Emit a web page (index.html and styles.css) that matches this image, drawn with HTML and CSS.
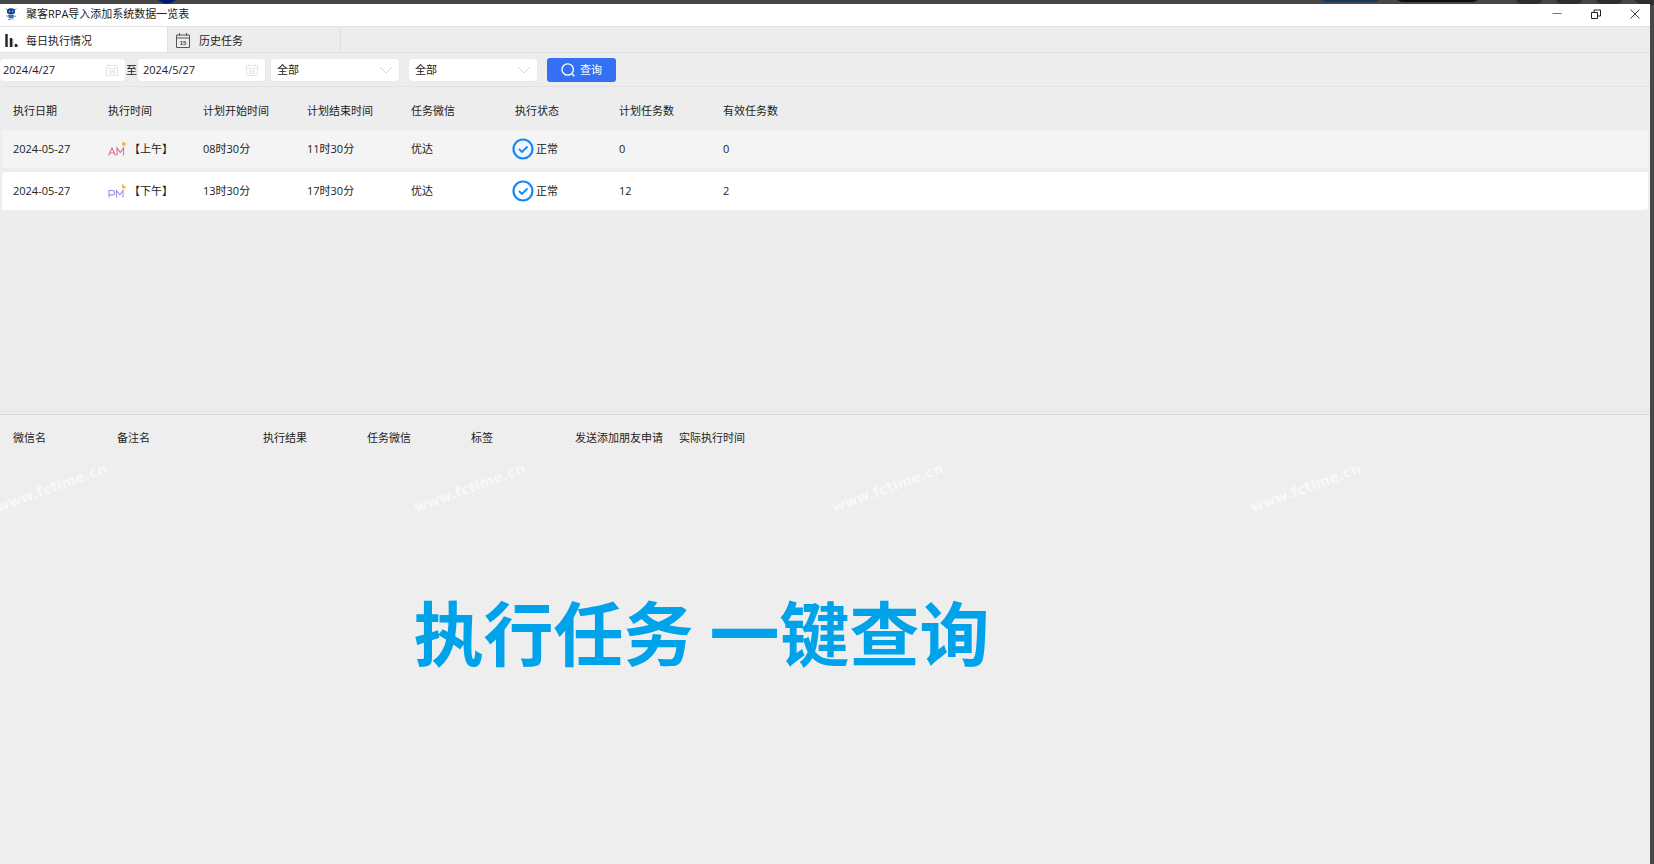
FILE: index.html
```html
<!DOCTYPE html>
<html lang="zh-CN">
<head>
<meta charset="utf-8">
<title>聚客RPA导入添加系统数据一览表</title>
<link rel="stylesheet" href="styles.css">
</head>
<body>
<svg class="desktop-strip" aria-hidden="true" height="6">
  <path d="M158 0h18l-6 3.500h-6z" fill="#001a70"/>
  <path d="M1321 0h58q-3 2-7 2h-44q-4 0-7-2z" fill="#10375c"/>
  <path d="M1397 0h81q-3 2-7 2h-67q-4 0-7-2z" fill="#0c0c0c"/>
  <g fill="#2d2d2d"><ellipse cx="1529" cy="0" rx="13" ry="5"/><ellipse cx="1569" cy="0" rx="13" ry="5"/><ellipse cx="1609" cy="0" rx="13" ry="5"/><ellipse cx="1648" cy="0" rx="13" ry="5"/></g>
</svg>
<div class="window">
  <header class="titlebar">
    <svg class="logo" viewBox="0 0 12 14" aria-hidden="true">
      <path d="M2 2.500Q6 0 10 2.500V6Q6 8.500 2 6z" fill="#123a8c"/>
      <path d="M.5 1.500l2 1.500M11.500 1.500l-2 1.500" stroke="#6da7dd" stroke-width="1"/>
      <circle cx="4.500" cy="4.300" r=".9" fill="#6fd0ff"/><circle cx="7.600" cy="4.300" r=".9" fill="#6fd0ff"/>
      <path d="M3.500 8h5l-.5 3h-4zM1 8.500l2 1M11 9l-2 .5" fill="#3b6fb5" stroke="#3b6fb5" stroke-width=".8"/>
      <path d="M3 12.700h3M7 12h2" stroke="#8da2bd" stroke-width="1.200"/>
    </svg>
    <h1 class="title">聚客RPA导入添加系统数据一览表</h1>
    <div class="window-buttons">
      <button aria-label="最小化"><svg viewBox="0 0 10 10"><path d="M.5 4.500h9" stroke="#777" stroke-width="1"/></svg></button>
      <button aria-label="还原"><svg viewBox="0 0 10 10"><path d="M.5 3.500h6v6h-6zM3 3.500V1h6.500v6H7" stroke="#222" fill="none"/></svg></button>
      <button aria-label="关闭"><svg viewBox="0 0 10 10"><path d="M.5.500l9 9M9.500.500l-9 9" stroke="#444"/></svg></button>
    </div>
  </header>
  <nav class="tabs">
    <button class="tab active">
      <svg class="tab-icon" viewBox="0 0 16 16" aria-hidden="true"><path d="M2.500 1v13M7 5v9M12 11v3" stroke="#222" stroke-width="2.400"/><path d="M8.700 6v8M13.700 12v2" stroke="#888" stroke-width="1"/></svg>
      每日执行情况
    </button>
    <button class="tab">
      <svg class="tab-icon" viewBox="0 0 16 16" aria-hidden="true"><path d="M1.500 2h13v12.500h-13zM1.500 5h13M4.500 0v3M11.500 0v3" stroke="#555" fill="none"/><text class="cal-num" x="8" y="12" fill="#444">15</text></svg>
      历史任务
    </button>
  </nav>
  <form class="filters" onsubmit="return false">
    <label class="field date">
      <input type="text" value="2024/4/27" aria-label="开始日期">
      <svg viewBox="0 0 14 14" aria-hidden="true"><path d="M1.500 2.500h11v10h-11zM1.500 5.500h11M4 1v2.500M10 1v2.500" stroke="#e6e6e6" fill="none"/><text class="cal-num" x="7" y="11" fill="#dcdcdc">15</text></svg>
    </label>
    <span class="to">至</span>
    <label class="field date">
      <input type="text" value="2024/5/27" aria-label="结束日期">
      <svg viewBox="0 0 14 14" aria-hidden="true"><path d="M1.500 2.500h11v10h-11zM1.500 5.500h11M4 1v2.500M10 1v2.500" stroke="#e6e6e6" fill="none"/><text class="cal-num" x="7" y="11" fill="#dcdcdc">15</text></svg>
    </label>
    <label class="field choice first">
      <select aria-label="任务微信"><option>全部</option></select>
      <svg viewBox="0 0 14 14" aria-hidden="true"><path d="M1 4l6 6 6-6" stroke="#d8d8d8" fill="none"/></svg>
    </label>
    <label class="field choice">
      <select aria-label="执行状态"><option>全部</option></select>
      <svg viewBox="0 0 14 14" aria-hidden="true"><path d="M1 4l6 6 6-6" stroke="#d8d8d8" fill="none"/></svg>
    </label>
    <button class="query"><svg viewBox="0 0 14 14" aria-hidden="true"><circle cx="6.700" cy="6.500" r="5.700" stroke="#fff" stroke-width="1.300" fill="none"/><path d="M11.300 11l2 2.300" stroke="#fff" stroke-width="1.500"/></svg>查询</button>
  </form>
  <section class="pane plans">
    <table class="grid">
      <colgroup><col class="c-short"><col class="c-short"><col class="c-std"><col class="c-std"><col class="c-std"><col class="c-std"><col class="c-std"><col></colgroup>
      <thead><tr><th>执行日期</th><th>执行时间</th><th>计划开始时间</th><th>计划结束时间</th><th>任务微信</th><th>执行状态</th><th>计划任务数</th><th>有效任务数</th></tr></thead>
      <tbody>
        <tr class="alt"><td>2024-05-27</td>
          <td><span class="half"><svg viewBox="0 0 18 14" aria-hidden="true"><path d="M.5 13.500L4 6 7.500 13.500M2 11h4M9 13.500V6l3.300 4.500L15.500 6v7.500" stroke="#e0708a" stroke-width="1.100" fill="none"/><circle cx="15.800" cy="2" r="1.900" fill="#fbb040"/></svg>【上午】</span></td>
          <td>08时30分</td><td>11时30分</td><td>优达</td>
          <td><span class="status"><svg viewBox="0 0 22 22" aria-hidden="true"><circle cx="11" cy="11" r="9.500" stroke="#0f87ff" stroke-width="2.200" fill="none"/><path d="M7 11l3 3 5.500-5.500" stroke="#0f87ff" stroke-width="1.800" fill="none"/></svg>正常</span></td>
          <td>0</td><td>0</td></tr>
        <tr><td>2024-05-27</td>
          <td><span class="half"><svg viewBox="0 0 18 14" aria-hidden="true"><path d="M1 13.500V6.500h3.500a2.200 2.200 0 0 1 0 4.400H1M8.500 13.500V6.500l3.300 4.300L15 6.500v7" stroke="#a48be8" stroke-width="1.100" fill="none"/><path d="M15 .3C13.500 1 13.600 4 15.800 4.200 17 4.200 17.700 3.500 17.800 2.700 16.500 3 15 2 15 .3z" fill="#fbb040" stroke="#fbb040" stroke-width=".6"/></svg>【下午】</span></td>
          <td>13时30分</td><td>17时30分</td><td>优达</td>
          <td><span class="status"><svg viewBox="0 0 22 22" aria-hidden="true"><circle cx="11" cy="11" r="9.500" stroke="#0f87ff" stroke-width="2.200" fill="none"/><path d="M7 11l3 3 5.500-5.500" stroke="#0f87ff" stroke-width="1.800" fill="none"/></svg>正常</span></td>
          <td>12</td><td>2</td></tr>
      </tbody>
    </table>
  </section>
  <section class="pane details">
    <table class="grid">
      <colgroup><col class="c-std"><col class="c-wide"><col class="c-std"><col class="c-std"><col class="c-std"><col class="c-std"><col></colgroup>
      <thead><tr><th>微信名</th><th>备注名</th><th>执行结果</th><th>任务微信</th><th>标签</th><th>发送添加朋友申请</th><th>实际执行时间</th></tr></thead>
    </table>
    <div class="watermarks" aria-hidden="true"><span>www.fctime.cn</span><span>www.fctime.cn</span><span>www.fctime.cn</span><span>www.fctime.cn</span></div>
    <p class="slogan">执行任务 一键查询</p>
  </section>
</div>
</body>
</html>
```

FILE: styles.css
```css
* { box-sizing: border-box; }

body {
  margin: 0;
  min-height: 100vh;
  display: flex;
  padding: 4px 4px 0 0;
  background: #474747;
  color: #222;
  font: 11px/16px "Open Sans", "Noto Sans CJK SC", sans-serif;
}

button, input, select { font: inherit; color: inherit; border: 0; margin: 0; }
button { padding: 0; background: none; }

.desktop-strip { position: absolute; top: 0; left: 0; width: 100%; }

.window {
  position: relative;
  flex: 1;
  min-width: 0;
  display: flex;
  flex-direction: column;
  background: #ededed;
}

.titlebar {
  display: flex;
  align-items: center;
  height: 22px;
  padding: 0 0 2px 5px;
  background: #fff;
}
.logo { width: 12px; height: 14px; margin-right: 9px; }
.title { margin: 0; font-size: 11px; font-weight: 400; }
.window-buttons { display: flex; margin-left: auto; }
.window-buttons button { width: 39px; height: 20px; display: flex; align-items: center; justify-content: center; }
.window-buttons button:last-child { width: 30px; margin-left: 5px; }
.window-buttons svg { width: 10px; height: 10px; }

.tabs {
  display: flex;
  height: 27px;
  border-top: 1px solid #e4e4e4;
  border-bottom: 1px solid #e2e2e2;
}
.tab {
  display: flex;
  align-items: center;
  gap: 8px;
  width: 173px;
  padding: 2px 0 0 7px;
  border-right: 1px solid #e0e0e0;
}
.tab.active { width: 168px; padding-left: 4px; gap: 6px; background: #fff; }
.tab-icon { width: 16px; height: 16px; }
.cal-num { font: bold 6px "Liberation Sans", sans-serif; text-anchor: middle; }

.filters {
  display: flex;
  align-items: center;
  height: 34px;
  border-bottom: 1px solid #e4e4e4;
}
.field {
  display: flex;
  align-items: center;
  width: 128px;
  height: 22px;
  padding: 0 6px;
  background: #fff;
  border-radius: 3px;
  box-shadow: 0 0 1px #ccc;
}
.field.date { width: 127px; padding-left: 5px; }
.field.date:first-child { width: 125px; padding-left: 3px; }
.field svg { width: 14px; height: 14px; flex: none; }
.field input, .field select {
  flex: 1;
  min-width: 0;
  padding: 0;
  background: none;
  appearance: none;
}
.choice { margin-right: 10px; }
.choice.first { margin-left: 6px; }
.to { margin: 0 1px; }
.query {
  display: flex;
  align-items: center;
  justify-content: center;
  gap: 5px;
  width: 69px;
  height: 24px;
  background: #3370f5;
  color: #fff;
  border-radius: 3px;
}
.query svg { width: 14px; height: 14px; }

.pane { position: relative; padding: 0 2px; }
.plans { flex: 18 0 0; border-bottom: 1px solid #e4e4e4; }
.details { flex: 25 0 0; margin-top: 2px; border-top: 1px solid #dcdcdc; background: #eee; }

.grid { width: 100%; table-layout: fixed; border-collapse: separate; border-spacing: 0 4px; margin-top: -4px; }
.grid th, .grid td { padding: 0 0 0 11px; text-align: left; font-weight: 400; white-space: nowrap; }
.grid th { height: 39px; padding-top: 8px; }
.grid td { height: 38px; background: #fff; }
.grid .alt td { background: #f4f4f4; }
.grid td:first-child { border-radius: 3px 0 0 3px; }
.grid td:last-child { border-radius: 0 3px 3px 0; }
.c-short { width: 95px; }
.c-std { width: 104px; }
.c-wide { width: 146px; }

.half, .status { display: flex; align-items: center; }
.half svg { width: 18px; height: 14px; margin-right: 3px; }
.status { margin-left: -3px; gap: 2px; }
.status svg { width: 22px; height: 22px; }

.watermarks {
  position: absolute;
  top: 32px;
  left: 0;
  right: 0;
  display: flex;
  padding: 50px 0 10px;
  overflow: hidden;
  color: #f8f8f8;
  font: bold 14px/20px "DejaVu Sans", sans-serif;
}
.watermarks span {
  flex: none;
  width: 118px;
  height: 20px;
  margin-right: 300px;
  transform: rotate(-20deg);
  transform-origin: 0 100%;
}

.slogan {
  margin: 123px 0 0;
  padding-left: 25%;
  color: #00a2ea;
  font: bold 70px/100px "Noto Sans CJK SC", sans-serif;
}
```
